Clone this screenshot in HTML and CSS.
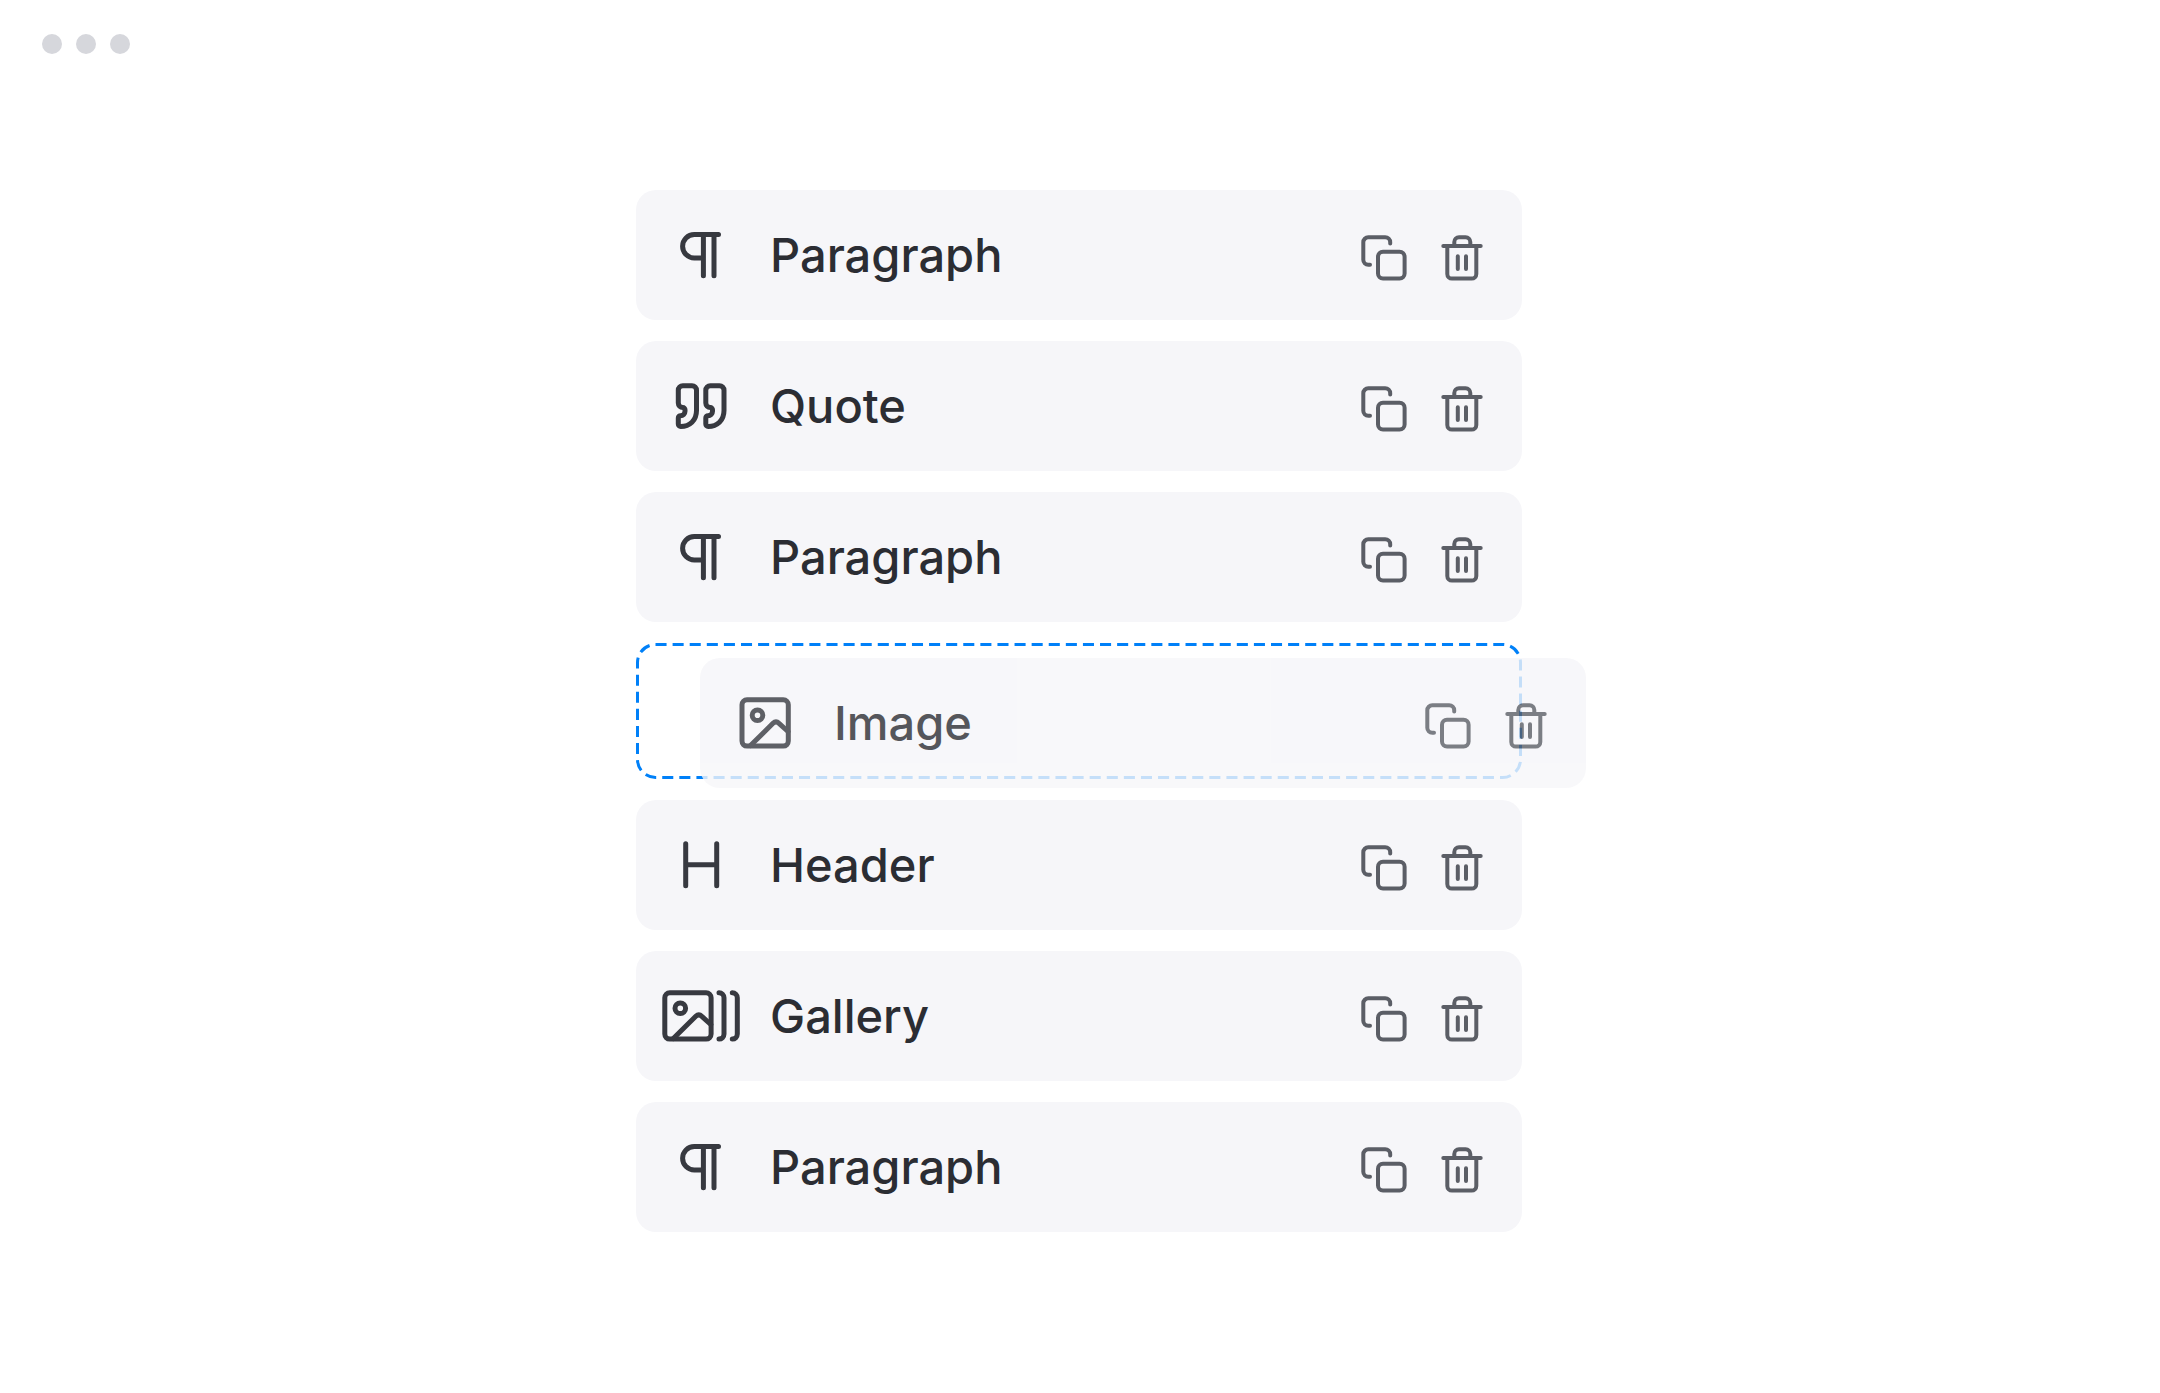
FILE: index.html
```html
<!DOCTYPE html>
<html lang="en">
<head>
<meta charset="utf-8">
<title>Blocks</title>
<link rel="stylesheet" href="styles.css">
</head>
<body>

<!-- shared icons -->
<svg class="sprite" aria-hidden="true">
	<symbol id="paragraph" viewBox="0 0 78 52">
		<path d="M56.5 5.6H32.3a11.7 11.7 0 0 0 0 23.4h9.1M41.4 5.6v41.2M52 5.6v41.2"/>
	</symbol>
	<symbol id="quote" viewBox="0 0 78 52">
		<path d="M20.8 5.7a4.5 4.5 0 0 0-4.5 4.5V23a4.5 4.5 0 0 0 4.5 4.5 2.2 2.2 0 0 1 2.2 2.2v1.5a4.5 4.5 0 0 1-4.5 4.5 2.2 2.2 0 0 0-2.2 2.2v6.2a2.4 2.4 0 0 0 2.4 2.4c9 0 15.8-6 15.8-16V10.2a4.5 4.5 0 0 0-4.5-4.5z"/>
		<path d="M48.3 5.7a4.5 4.5 0 0 0-4.5 4.5V23a4.5 4.5 0 0 0 4.5 4.5 2.2 2.2 0 0 1 2.2 2.2v1.5a4.5 4.5 0 0 1-4.5 4.5 2.2 2.2 0 0 0-2.2 2.2v6.2a2.4 2.4 0 0 0 2.4 2.4c9 0 15.8-6 15.8-16V10.2a4.5 4.5 0 0 0-4.5-4.5z"/>
	</symbol>
	<symbol id="image" viewBox="0 0 78 52">
		<rect x="16" y="2.8" width="46.3" height="46.3" rx="5"/>
		<circle cx="31.5" cy="18.3" r="5.3"/>
		<path d="M24.5 48.5L47 26.3q3-3 6 0l9 8.2"/>
	</symbol>
	<symbol id="header" viewBox="0 0 78 52">
		<path d="M23.7 4.8v42M54.7 4.8v42M23.7 25.7h31"/>
	</symbol>
	<symbol id="gallery" viewBox="0 0 78 52">
		<rect x="2.8" y="2.8" width="46.3" height="46.3" rx="5"/>
		<circle cx="18.3" cy="18.3" r="5.3"/>
		<path d="M11.3 48.5l22.5-22.2q3-3 6 0l9 8.2M57 2.8a5 5 0 0 1 5 5v36.3a5 5 0 0 1-5 5M70.3 2.8a5 5 0 0 1 5 5v36.3a5 5 0 0 1-5 5"/>
	</symbol>
	<symbol id="copy" viewBox="0 0 46 46">
		<path d="M29.2 8.5V7.3a5 5 0 0 0-5-5H7.3a5 5 0 0 0-5 5v17.4a5 5 0 0 0 5 5H9"/>
		<rect x="17" y="16.8" width="26.6" height="26.8" rx="5"/>
	</symbol>
	<symbol id="trash" viewBox="0 0 46 46">
		<path d="M4.3 11h37.4M8.3 11v27.9a4.7 4.7 0 0 0 4.7 4.7h19.6a4.7 4.7 0 0 0 4.7-4.7V11M15.3 11V7a4.7 4.7 0 0 1 4.7-4.7h6.6A4.7 4.7 0 0 1 31.3 7v4M18.8 21.3V34M27 21.3V34"/>
	</symbol>
</svg>

<header class="titlebar">
	<span class="dot"></span>
	<span class="dot"></span>
	<span class="dot"></span>
</header>

<main>
<ul class="blocks">
	<li class="block">
		<svg class="icon"><use href="#paragraph"/></svg>
		<span class="name">Paragraph</span>
		<div class="actions">
			<button type="button" aria-label="Duplicate"><svg><use href="#copy"/></svg></button>
			<button type="button" aria-label="Delete"><svg><use href="#trash"/></svg></button>
		</div>
	</li>
	<li class="block">
		<svg class="icon"><use href="#quote"/></svg>
		<span class="name">Quote</span>
		<div class="actions">
			<button type="button" aria-label="Duplicate"><svg><use href="#copy"/></svg></button>
			<button type="button" aria-label="Delete"><svg><use href="#trash"/></svg></button>
		</div>
	</li>
	<li class="block">
		<svg class="icon"><use href="#paragraph"/></svg>
		<span class="name">Paragraph</span>
		<div class="actions">
			<button type="button" aria-label="Duplicate"><svg><use href="#copy"/></svg></button>
			<button type="button" aria-label="Delete"><svg><use href="#trash"/></svg></button>
		</div>
	</li>
	<!-- drop target, with the block being dragged over it -->
	<li class="dropzone">
		<svg class="outline"><rect x="1.5" y="1.5" rx="18" pathLength="1989"/></svg>
		<div class="block dragging">
			<svg class="icon"><use href="#image"/></svg>
			<span class="name">Image</span>
			<div class="actions">
				<button type="button" aria-label="Duplicate"><svg><use href="#copy"/></svg></button>
				<button type="button" aria-label="Delete"><svg><use href="#trash"/></svg></button>
			</div>
		</div>
	</li>
	<li class="block">
		<svg class="icon"><use href="#header"/></svg>
		<span class="name">Header</span>
		<div class="actions">
			<button type="button" aria-label="Duplicate"><svg><use href="#copy"/></svg></button>
			<button type="button" aria-label="Delete"><svg><use href="#trash"/></svg></button>
		</div>
	</li>
	<li class="block">
		<svg class="icon"><use href="#gallery"/></svg>
		<span class="name">Gallery</span>
		<div class="actions">
			<button type="button" aria-label="Duplicate"><svg><use href="#copy"/></svg></button>
			<button type="button" aria-label="Delete"><svg><use href="#trash"/></svg></button>
		</div>
	</li>
	<li class="block">
		<svg class="icon"><use href="#paragraph"/></svg>
		<span class="name">Paragraph</span>
		<div class="actions">
			<button type="button" aria-label="Duplicate"><svg><use href="#copy"/></svg></button>
			<button type="button" aria-label="Delete"><svg><use href="#trash"/></svg></button>
		</div>
	</li>
</ul>
</main>

</body>
</html>
```
FILE: styles.css
```css
:root {
	--text: #2b2d33;
	--icon: #373940;
	--action: #5b5e66;
	--block: #f6f6f9;
	--dot: #d6d7dc;
	--blue: #0080f8;
}

* {
	box-sizing: border-box;
}

body {
	margin: 0;
	background: #fff;
	color: var(--text);
	font-family: Inter, "Liberation Sans", sans-serif;
}

.sprite {
	display: none;
}

.titlebar {
	display: flex;
	gap: 14px;
	padding: 34px 42px 0;
}

.dot {
	width: 20px;
	height: 20px;
	border-radius: 50%;
	background: var(--dot);
}

main {
	padding: 136px 2px 136px 0;
}

.blocks {
	display: flex;
	flex-direction: column;
	gap: 21px;
	max-width: 886px;
	margin: 0 auto;
	padding: 0;
	list-style: none;
}

.block {
	display: flex;
	align-items: center;
	gap: 30px;
	padding: 35px 37px 35px 26px;
	border-radius: 20px;
	background: var(--block);
}

svg {
	display: block;
	fill: none;
	stroke-linecap: round;
	stroke-linejoin: round;
}

.icon {
	flex: none;
	width: 78px;
	height: 52px;
	stroke: var(--icon);
	stroke-width: 5px;
}

.name {
	flex: 1;
	font-size: 47px;
	font-weight: 500;
	line-height: 60px;
}

.actions {
	display: flex;
	gap: 32px;
	padding-top: 6px;
}

.actions button {
	padding: 0;
	border: none;
	background: none;
	cursor: pointer;
}

.actions svg {
	width: 46px;
	height: 46px;
	stroke: var(--action);
	stroke-width: 4px;
}

.dropzone {
	position: relative;
	height: 136px;
}

.outline {
	width: 100%;
	height: 100%;
	stroke: var(--blue);
	stroke-width: 3px;
	stroke-dasharray: 11 6;
	stroke-linecap: butt;
}

.outline rect {
	width: calc(100% - 3px);
	height: calc(100% - 3px);
}

/* floats over the list while it is dragged */
.dragging {
	position: absolute;
	top: 15px;
	left: 64px;
	width: 100%;
	opacity: 0.8;
}
```
